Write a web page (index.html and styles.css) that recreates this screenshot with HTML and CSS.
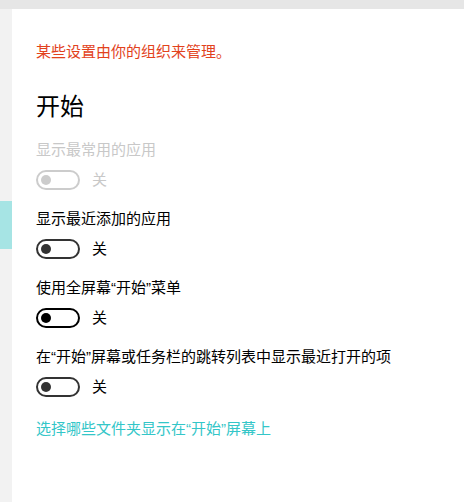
FILE: index.html
```html
<!DOCTYPE html>
<html lang="zh-CN">
<head>
    <meta charset="UTF-8">
    <title>开始</title>
    <link rel="stylesheet" href="styles.css">
</head>
<body>
    <div class="topbar"></div>
    <div class="layout">
        <div class="sidebar">
            <div class="sidebar-mark"></div>
        </div>
        <div class="main">
            <p class="policy">某些设置由你的组织来管理。</p>
            <h1 class="title">开始</h1>

            <div class="setting disabled">
                <div class="label">显示最常用的应用</div>
                <div class="switch-row">
                    <span class="switch"><span class="knob"></span></span>
                    <span class="state">关</span>
                </div>
            </div>

            <div class="setting">
                <div class="label">显示最近添加的应用</div>
                <div class="switch-row">
                    <span class="switch"><span class="knob"></span></span>
                    <span class="state">关</span>
                </div>
            </div>

            <div class="setting">
                <div class="label">使用全屏幕“开始”菜单</div>
                <div class="switch-row">
                    <span class="switch dark"><span class="knob"></span></span>
                    <span class="state">关</span>
                </div>
            </div>

            <div class="setting">
                <div class="label">在“开始”屏幕或任务栏的跳转列表中显示最近打开的项</div>
                <div class="switch-row">
                    <span class="switch"><span class="knob"></span></span>
                    <span class="state">关</span>
                </div>
            </div>

            <a class="link" href="#">选择哪些文件夹显示在“开始”屏幕上</a>
        </div>
    </div>
</body>
</html>
```

FILE: styles.css
```css
body {
    margin: 0;
    font-family: "Liberation Sans", "Noto Sans CJK SC", sans-serif;
    font-size: 15px;
    line-height: 20px;
    color: #000;
    background-color: #fff;
}
.topbar {
    height: 9px;
    background-color: #e6e6e6;
}
.layout {
    display: flex;
    height: 493px;
}
.sidebar {
    width: 12px;
    padding-top: 192px;
    background-color: #f2f2f2;
}
.sidebar-mark {
    height: 48px;
    background-color: #a6e4e4;
}
.main {
    flex: 1;
    padding: 33px 24px 0 24px;
}
.policy {
    margin: 0;
    color: #e2421c;
}
.title {
    margin: 29px 0 0 0;
    font-size: 24px;
    line-height: 32px;
    font-weight: normal;
}
.setting {
    margin-top: 19px;
}
.title + .setting {
    margin-top: 17px;
}
.switch-row {
    display: flex;
    align-items: center;
    gap: 12px;
    margin-top: 10px;
}
.switch {
    box-sizing: border-box;
    width: 44px;
    height: 20px;
    border: 2px solid #333;
    border-radius: 10px;
    display: flex;
    align-items: center;
    padding-left: 3px;
}
.knob {
    width: 10px;
    height: 10px;
    border-radius: 50%;
    background-color: #333;
}
.switch.dark {
    border-color: #000;
}
.switch.dark .knob {
    background-color: #000;
}
.disabled .label,
.disabled .state {
    color: #c8c8c8;
}
.disabled .switch {
    border-color: #cccccc;
}
.disabled .knob {
    background-color: #cccccc;
}
.link {
    display: block;
    margin-top: 22px;
    color: #33c6c8;
    text-decoration: none;
}
```
